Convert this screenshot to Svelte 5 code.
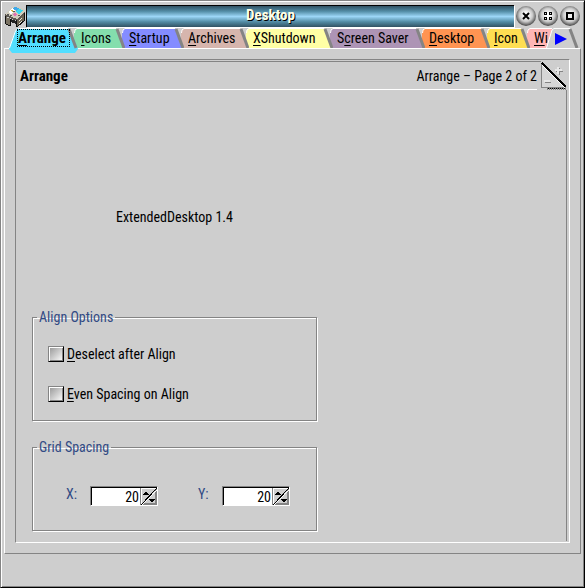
<script lang="ts">
  type Tab = { pre?: string; key: string; post: string; width: number; color: string; active?: boolean };

  const tabs: Tab[] = [
    { key: 'A', post: 'rrange', width: 69, color: '#52deff', active: true },
    { key: 'I', post: 'cons', width: 51, color: '#84dead' },
    { key: 'S', post: 'tartup', width: 62, color: '#848cff' },
    { key: 'A', post: 'rchives', width: 68, color: '#d6b5ad' },
    { key: 'X', post: 'Shutdown', width: 87, color: '#ffffa5' },
    { pre: 'S', key: 'c', post: 'reen Saver', width: 95, color: '#ad94b5' },
    { key: 'D', post: 'esktop', width: 68, color: '#ff9452' },
    { key: 'I', post: 'con', width: 43, color: '#ffde52' },
    { key: 'W', post: 'i', width: 40, color: '#ffb5b5' }
  ];

  let deselect = $state(false);
  let even = $state(false);
  let x = $state(20);
  let y = $state(20);
</script>

{#snippet spin(label: string, value: number, set: (v: number) => void)}
  <label class="spin-label" for="grid-{label}">{label}:</label>
  <div class="spin">
    <input id="grid-{label}" type="text" {value} onchange={(e) => set(Number(e.currentTarget.value))} />
    <button type="button" aria-label="Change {label}" onclick={() => set(value + 1)}>
      <svg width="16" height="17" shape-rendering="crispEdges">
        <path d="M0 0h16v17H0z" fill="#cecece" />
        <path d="M16 1v16H1v-2h13V1z" fill="#848484" />
        <path d="M0 0h16v1H1v16H0z" fill="#fff" />
        <path d="M1 17 16 2" stroke="#fff" />
        <path d="M0 17 16 0" stroke="#000" />
        <path d="M2 7h6V6H7V5H6V4H4v1H3v1H2z" fill="#000" />
        <path d="M8 11h6v1h-1v1h-1v1h-2v-1H9v-1H8z" fill="#000" />
      </svg>
    </button>
  </div>
{/snippet}

<div class="window">
  <header class="titlebar">
    <svg class="desk" width="21" height="22" shape-rendering="crispEdges">
      <path d="m0 9 8-7h6l6 3v3l-8 7-4-2-8-3z" fill="#d0ccbc" />
      <path d="m0 9 12 5 8-8v3l-8 7-12-5z" fill="#5a5650" />
      <path d="m1 12 5 2v6l-1 1-4-2z" fill="#7b7363" />
      <path d="m6 14 5 2v3l-5-2z" fill="#222" />
      <path d="m12 16 7-6v6l-7 6z" fill="#6b6352" />
      <path d="M11 15h1v7h-1zM19 8h1v8h-1zM5 14h1v7H5zM0 11h1v8H0z" fill="#111" />
      <path d="m12 22 8-7M1 19l4 2" stroke="#111" />
      <path d="m14 16 3-3M14 19l3-3" stroke="#e8e8d8" />
      <path d="m3 7 5-4 3 2-5 4z" fill="#fff" />
      <path d="m9 2 5 1-2 3-4-2z" fill="#40a8e8" />
      <path d="m13 4 5 1-4 4-3-2z" fill="#38d8f0" />
      <path d="m9 8 3 1-2 2-3-1z" fill="#e070b0" />
      <path d="m6 5 3 1-2 1z" fill="#d8b848" />
      <path d="M2 9h2v1H2zM5 10h2v1H5zM8 6h2v1H8zM13 10h2v1h-2z" fill="#555" />
    </svg>
    <h1>Desktop</h1>
    <div class="controls">
      <button type="button" aria-label="Close">
        <svg width="20" height="20"><path d="m7 7 6 6m0-6-6 6" stroke="#000" stroke-width="2" /></svg>
      </button>
      <button type="button" aria-label="Minimize">
        <svg width="20" height="20" shape-rendering="crispEdges">
          <path d="M6 6h3v3H6zM11 6h3v3h-3zM6 11h3v3H6zM11 11h3v3h-3z" fill="#000" />
          <path d="M7 7h1v1H7zM12 7h1v1h-1zM7 12h1v1H7zM12 12h1v1h-1z" fill="#ddd" />
        </svg>
      </button>
      <button type="button" aria-label="Maximize">
        <svg width="20" height="20" shape-rendering="crispEdges">
          <path d="M7 7h6v6H7z" fill="#eee" stroke="#000" stroke-width="2" />
        </svg>
      </button>
    </div>
  </header>

  <nav class="tabs">
    <div class="strip">
      {#each tabs as tab, i}
        {@const w = tab.width}
        <button type="button" class="tab" class:active={tab.active} style:width="{w}px" style:z-index={tab.active ? 20 : 10 - i}>
          {#if tab.active}
            <svg width={w} height="25">
              <path d="M0 21 6 3 9 0h{w - 19}l3 3 7 18-3 4H3z" fill={tab.color} />
              <path d="M.5 20 6.5 3 9 .5h{w - 19}" fill="none" stroke="#fff" />
              <path d="M{w - 9} 1 {w - 2} 20" stroke="#848484" stroke-width="3" />
            </svg>
          {:else}
            <svg width={w} height="20">
              <path d="M0 20V3l3-3h{w - 12}l8 20z" fill={tab.color} />
              <path d="M.5 5 1 2 3 .5h{w - 12}" fill="none" stroke="#fff" />
              <path d="M{w - 8} 1 {w - 1} 20" stroke="#848484" stroke-width="3" />
            </svg>
          {/if}
          <span>{tab.pre ?? ''}<u>{tab.key}</u>{tab.post}</span>
        </button>
      {/each}
    </div>
    <button type="button" class="more" aria-label="More tabs">
      <svg width="33" height="20">
        <path d="m0 20 6-18 2-2h16l8 20z" fill="#cecece" />
        <path d="M.5 20 6 2 8 .5h16" fill="none" stroke="#fff" />
        <path d="m24 1 7 19" stroke="#848484" stroke-width="3" />
        <path d="m9 5 12 6-12 6z" fill="#00f" />
      </svg>
    </button>
  </nav>

  <main class="notebook">
    <div class="page">
      <header class="page-head">
        <h2>Arrange</h2>
        <p>Arrange – Page 2 of 2</p>
        <button type="button" class="turn" aria-label="Turn page">
          <svg width="26" height="28" shape-rendering="crispEdges">
            <path d="M.5 2v23.5H24z" fill="#d6d6d6" stroke="#848484" />
            <path d="m1 3 23 23" stroke="#fff" />
            <path d="m2 1 23 23" stroke="#848484" />
            <path d="m1 1 24 24" stroke="#000" stroke-width="2" />
            <path d="M6 26h19" stroke="#000" />
            <path d="M6 27h19" stroke="#848484" stroke-width="2" stroke-dasharray="1 1" />
            <path d="M4 20.5h6M15 9.5h7M18.5 6v7" fill="none" stroke="#848484" />
            <path d="M3 19h6M14 8h7M17 5v7" fill="none" stroke="#e7e7e7" stroke-width="2" />
          </svg>
        </button>
      </header>

      <div class="page-body">
        <p class="product">ExtendedDesktop 1.4</p>

        <fieldset class="align">
          <legend>Align Options</legend>
          <label><input type="checkbox" bind:checked={deselect} /><span><u>D</u>eselect after Align</span></label>
          <label><input type="checkbox" bind:checked={even} /><span><u>E</u>ven Spacing on Align</span></label>
        </fieldset>

        <fieldset class="grid">
          <legend>Grid Spacing</legend>
          <div class="spins">
            {@render spin('X', x, (v) => (x = v))}
            {@render spin('Y', y, (v) => (y = v))}
          </div>
        </fieldset>
      </div>
    </div>
  </main>
</div>

<style>
  :global(body) { margin: 0; background: #cecece; }
  .window {
    --dark: #848484;
    box-sizing: border-box;
    min-height: 100vh;
    padding: 3px 3px 33px 3px;
    border: 1px solid var(--dark);
    border-right-color: #000;
    border-bottom-color: #000;
    box-shadow: inset 1px 1px #fff, inset -1px -1px var(--dark);
    display: flex; flex-direction: column;
    background: #cecece;
    color: #000;
    font: 14px/16px "Roboto Condensed", "Open Sans Condensed", "Liberation Sans Narrow", Roboto, sans-serif;
  }
  button {
    padding: 0; border: 0; background: none;
    font: inherit; color: inherit;
  }
  svg { display: block; }
  h1, h2, p { margin: 0; }
  u { text-underline-offset: 2px; }

  .titlebar { display: flex; height: 24px; }
  .desk { margin: 1px 0 0 1px; }
  h1 {
    box-sizing: border-box;
    flex: 1; height: 22px; margin-top: 1px;
    border: solid #000; border-width: 1px 0 0 1px;
    box-shadow: 1px 1px #fff;
    background: linear-gradient(#315263, #528ca5 25%, #9cd6f7 50%, #528ca5 75%, #315263);
    color: #ffffe7;
    font-size: 15px; line-height: 19px; font-weight: 700; text-align: center;
    text-shadow: 1px 1px #000;
  }
  .controls { display: flex; gap: 2px; padding: 2px 1px 0 2px; }
  .controls button {
    width: 20px; height: 20px; border-radius: 50%;
    background: radial-gradient(circle at 50% 45%, #fff 15%, #c8c8c8 45%, #848484 60%, #555 70%);
  }

  .tabs { display: flex; height: 20px; padding: 0 2px 0 5px; position: relative; z-index: 1; }
  .strip { display: flex; flex: 1; min-width: 0; height: 26px; overflow: hidden; margin-right: -6px; }
  .tab { display: grid; flex: none; height: 20px; position: relative; margin-left: -3px; text-align: left; }
  .tab.active { height: 25px; margin-left: 0; margin-right: -1px; font-size: 15px; font-weight: 700; }
  .tab svg, .tab span { grid-area: 1 / 1; }
  .tab span { padding-left: 7px; line-height: 20px; white-space: nowrap; }
  .tab.active span {
    box-sizing: border-box;
    margin: 1px 8px 0; padding: 0; height: 18px; line-height: 17px;
    border: 1px dotted #000;
  }
  .more { position: relative; z-index: 30; }

  .notebook {
    flex: 1; display: flex;
    border: 1px solid #fff;
    border-right-color: var(--dark); border-bottom-color: var(--dark);
    padding: 10px;
  }
  .page {
    flex: 1; min-width: 0; display: flex; flex-direction: column;
    border: 1px solid #fff;
    border-left-color: var(--dark); border-top-color: var(--dark);
  }
  .page-head { display: flex; padding: 1px 2px 0 1px; }
  .page-head h2, .page-head p {
    height: 28px; line-height: 29px;
    border-top: 1px solid var(--dark);
    background: linear-gradient(#fff, #fff) 3px 100% / 100% 1px no-repeat;
  }
  .page-head h2 { flex: 1; padding-left: 3px; font-size: 15px; }
  .page-head p { padding-right: 4px; background-position: 0 100%; background-size: calc(100% - 4px) 1px; }
  .page-body {
    flex: 1; display: flex; flex-direction: column; align-items: flex-start;
    margin: 0 2px 1px 0;
    border-right: 1px solid var(--dark);
  }
  .product { margin: 119px 0 0 100px; }

  fieldset {
    box-sizing: border-box;
    width: 285px; max-width: 100%; min-width: 0;
    margin: 0 0 0 16px; padding: 0 15px;
    border: 1px solid var(--dark);
    box-shadow: 1px 1px #fff, inset 1px 1px #fff;
  }
  legend { padding: 0 2px; margin-left: -11px; color: #314a84; }
  .align { margin-top: 84px; height: 112px; }
  .align label { display: flex; align-items: center; gap: 3px; width: max-content; height: 16px; margin: 21px 0 24px; }
  .align input {
    appearance: none;
    width: 16px; height: 16px; margin: 0;
    border: 1px solid var(--dark);
    border-right-color: #000; border-bottom-color: #000;
    box-shadow: inset 1px 1px #fff, inset -1px -1px #848484;
    background: linear-gradient(135deg, #949494, #fff);
  }
  .align input:checked { background: #848484; }
  .grid { margin-top: 18px; height: 92px; }
  .spins { display: flex; margin-top: 31px; padding-left: 18px; }
  .spin-label { flex: none; width: 24px; color: #314a84; }
  .spin {
    box-sizing: border-box;
    flex: none; display: flex;
    width: 68px; height: 20px; margin-right: 40px;
    border: 1px solid #fff;
    border-top-color: var(--dark); border-left-color: var(--dark);
    padding: 1px 0 0 1px;
    background: linear-gradient(#fff, #fff) content-box, #000;
  }
  .spin input {
    flex: 1; min-width: 0; padding: 0 1px 0 0;
    border: 0; border-right: 1px solid var(--dark); outline: 0;
    background: none; text-align: right; font: inherit;
  }
</style>
